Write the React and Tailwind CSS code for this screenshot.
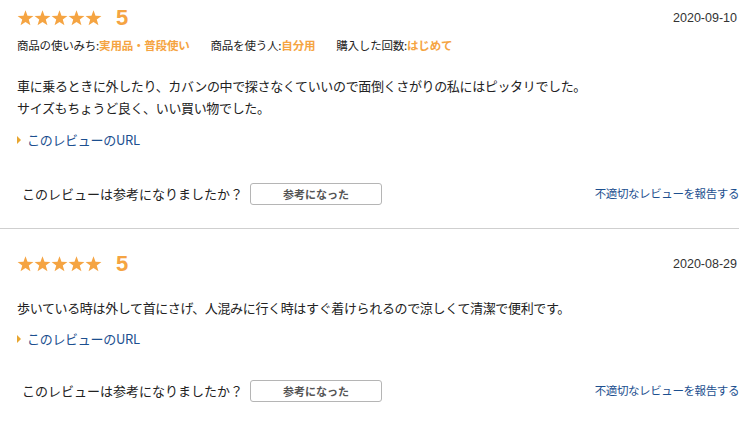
import React from 'react';

const jp = { fontFamily: '"MS PGothic", "Noto Sans CJK JP", "Liberation Sans", sans-serif' };

function Stars() {
  return (
    <div className="flex">
      {[0, 1, 2, 3, 4].map((i) => (
        <svg key={i} width="17" height="16" viewBox="0 0 24 23" className="block">
          <polygon
            points="12,0.5 14.9,8.4 23.4,8.6 16.7,13.8 19.1,22 12,17.2 4.9,22 7.3,13.8 0.6,8.6 9.1,8.4"
            fill="#f5a442"
          />
        </svg>
      ))}
    </div>
  );
}

function Review({ first, date, meta, lines }) {
  return (
    <div className={`w-[739px] pb-[23px] ${first ? 'border-b border-[#cfcfcf]' : 'pt-[17px]'}`}>
      {/* rating + date */}
      <div className="flex items-center justify-between h-[36px] pl-[17px]">
        <div className="flex items-center">
          <Stars />
          <span className="ml-[14px] text-[22px] font-bold text-[#f5a442] leading-none" style={{ fontFamily: '"Liberation Sans", sans-serif' }}>
            5
          </span>
        </div>
        <span className="text-[12.5px] text-[#333] mr-[2px]" style={{ fontFamily: '"Liberation Sans", sans-serif' }}>
          {date}
        </span>
      </div>

      {meta && (
        <div className="flex items-center h-[20px] pl-[17px] text-[11.5px] text-[#222] tracking-[-0.2px]" style={jp}>
          {meta.map((m, i) => (
            <span key={m.label} className={i > 0 ? 'ml-[21px]' : ''}>
              {m.label}:<span className="font-bold text-[#f5a442]">{m.value}</span>
            </span>
          ))}
        </div>
      )}

      {/* body */}
      <div className={`pl-[17px] text-[13px] leading-[22px] text-[#222] tracking-[-0.35px] ${first ? 'mt-[19px]' : 'mt-[15px]'}`} style={jp}>
        {lines.map((l) => (
          <p key={l}>{l}</p>
        ))}
      </div>

      {/* url link */}
      <div className={`flex items-center h-[20px] pl-[17px] ${first ? 'mt-[11px]' : 'mt-[10px]'}`}>
        <span className="w-0 h-0 border-y-[4px] border-y-transparent border-l-[4px] border-l-[#e8a630] mr-[6px]" />
        <a className="text-[13px] text-[#1c4f8f] tracking-[-0.3px]" style={jp}>
          このレビューのURL
        </a>
      </div>

      {/* helpful row */}
      <div className={`flex items-center justify-between h-[22px] ${first ? 'mt-[33px]' : 'mt-[31px]'}`}>
        <div className="flex items-center pl-[22px]">
          <span className="text-[13px] text-[#222]" style={jp}>
            このレビューは参考になりましたか？
          </span>
          <button
            className="ml-[7px] w-[132px] h-[22px] rounded-[3px] border border-[#b5b5b5] bg-white text-[11px] font-bold text-[#555] flex items-center justify-center"
            style={jp}
          >
            参考になった
          </button>
        </div>
        <a className="text-[11.5px] text-[#1c4f8f] tracking-[-0.4px]" style={jp}>
          不適切なレビューを報告する
        </a>
      </div>
    </div>
  );
}

export default function App() {
  return (
    <div className="w-[749px] h-[437px] bg-white overflow-hidden">
      <Review
        first
        date="2020-09-10"
        meta={[
          { label: '商品の使いみち', value: '実用品・普段使い' },
          { label: '商品を使う人', value: '自分用' },
          { label: '購入した回数', value: 'はじめて' },
        ]}
        lines={[
          '車に乗るときに外したり、カバンの中で探さなくていいので面倒くさがりの私にはピッタリでした。',
          'サイズもちょうど良く、いい買い物でした。',
        ]}
      />
      <Review
        date="2020-08-29"
        lines={['歩いている時は外して首にさげ、人混みに行く時はすぐ着けられるので涼しくて清潔で便利です。']}
      />
    </div>
  );
}
